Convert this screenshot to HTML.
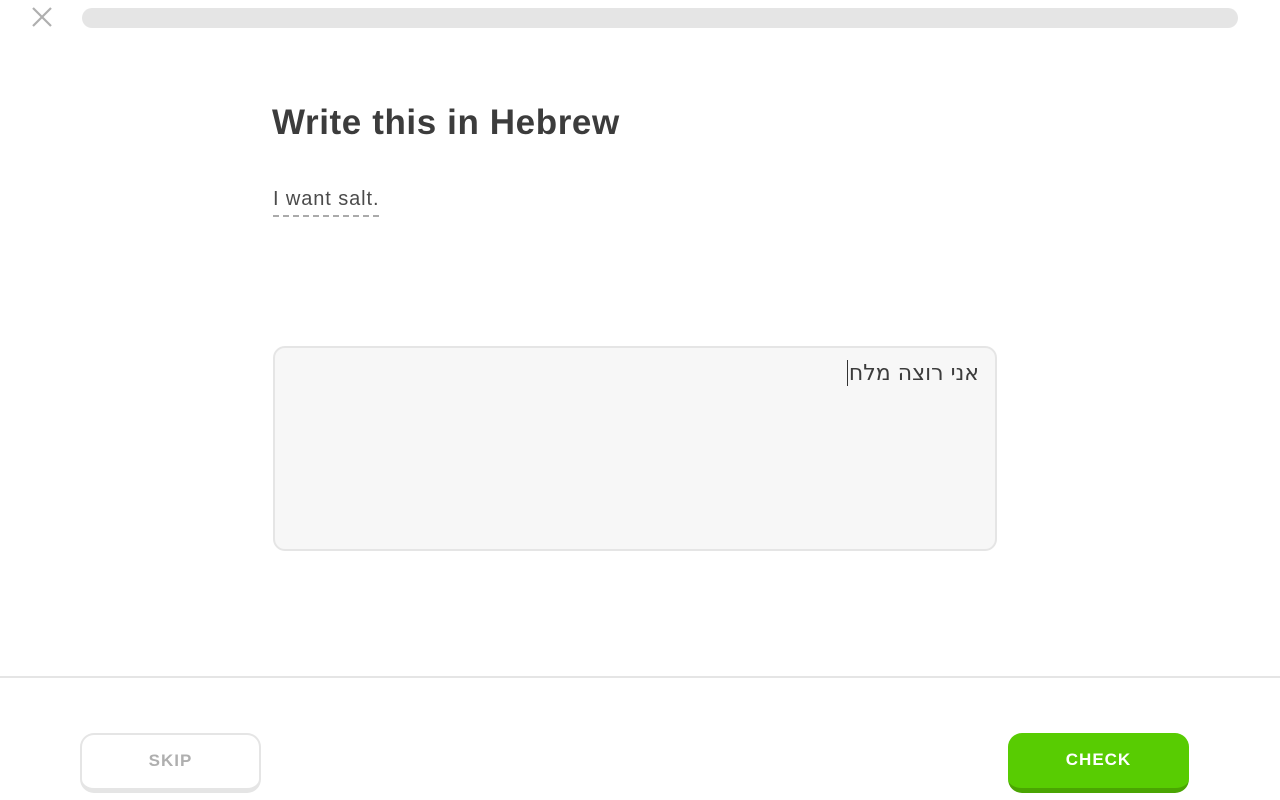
<!DOCTYPE html>
<html><head><style>
body{margin:0;width:1280px;height:800px;background:#fff;position:relative;overflow:hidden;font-family:"Liberation Sans",sans-serif}
.x{position:absolute;left:31px;top:6px}
.bar{position:absolute;left:82px;top:8px;width:1156px;height:20px;border-radius:10px;background:#e5e5e5}
h1{position:absolute;left:272px;top:103px;margin:0;font-size:35px;font-weight:bold;color:#3c3c3c;letter-spacing:0.6px}
.s{position:absolute;left:273px;top:187px;font-size:20px;color:#4b4b4b;border-bottom:2px dashed #aaa;padding-bottom:4px;line-height:24px;letter-spacing:0.9px}
.ta{position:absolute;left:273px;top:346px;width:720px;height:201px;border:2px solid #e5e5e5;border-radius:12px;background:#f7f7f7}
.he{position:absolute;right:16px;top:12px;font-size:22px;color:#3c3c3c;font-family:"DejaVu Sans",sans-serif;direction:rtl;white-space:nowrap}
.cur{display:inline-block;width:1px;height:26px;background:#333;vertical-align:-6px;margin-right:1px}
.hr{position:absolute;left:0;top:676px;width:1280px;height:2px;background:#e5e5e5}
.b{position:absolute;top:733px;height:60px;border-radius:14px;font-weight:bold;font-size:17px;letter-spacing:1px;text-align:center;box-sizing:border-box}
.skip{left:80px;width:181px;border:2px solid #e5e5e5;border-bottom:5px solid #e5e5e5;color:#afafaf;background:#fff;line-height:51px}
.check{left:1008px;width:181px;background:#58cc02;border-bottom:5px solid #4aa502;color:#fff;line-height:53px}
</style></head><body>
<svg class="x" width="22" height="22" viewBox="0 0 22 22"><path d="M2 2L20 20M20 2L2 20" stroke="#afafaf" stroke-width="2.2"/></svg>
<div class="bar"></div>
<h1>Write this in Hebrew</h1>
<div class="s">I want salt.</div>
<div class="ta"><div class="he">אני רוצה מלח<span class="cur"></span></div></div>
<div class="hr"></div>
<div class="b skip">SKIP</div>
<div class="b check">CHECK</div>
</body></html>
